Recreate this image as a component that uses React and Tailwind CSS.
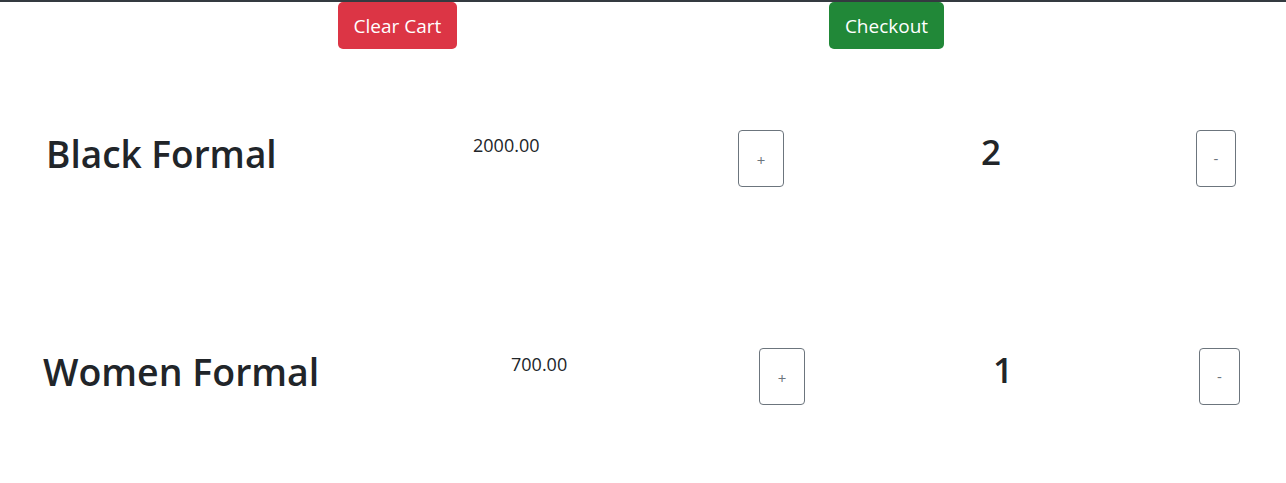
export default function App() {
  const font = { fontFamily: '"Open Sans", "Noto Sans", sans-serif' };

  return (
    <div className="min-h-[483px] bg-white text-[#212529] border-t-2 border-[#343a40]" style={font}>
      {/* Actions */}
      <div className="flex">
        <div className="w-[829px] pl-[338px]">
          <button className="w-[119px] h-[47px] rounded-[5px] bg-[#dc3545] text-white text-[19px] pt-[2px]">
            Clear Cart
          </button>
        </div>
        <button className="w-[115px] h-[47px] rounded-[5px] bg-[#218838] text-white text-[19px] pt-[2px]">
          Checkout
        </button>
      </div>

      {/* Item 1 */}
      <div className="flex items-start mt-[81px]">
        <div className="w-[473px] pl-[46px]">
          <h1 className="text-[37px] font-semibold leading-[48px]">Black Formal</h1>
        </div>
        <div className="w-[265px] pt-[1px] text-[18px] leading-7">2000.00</div>
        <div className="w-[243px]">
          <button className="w-[46px] h-[57px] rounded border border-[#6c757d] text-[#6c757d] text-[15px] pt-[4px]">+</button>
        </div>
        <div className="w-[215px] pt-[1px] text-[35px] font-semibold leading-[42px]">2</div>
        <button className="w-[40px] h-[57px] rounded border border-[#6c757d] text-[#6c757d] text-[15px]">-</button>
      </div>

      {/* Item 2 */}
      <div className="flex items-start mt-[161px]">
        <div className="w-[511px] pl-[43px]">
          <h1 className="text-[37.5px] font-semibold leading-[48px]">Women Formal</h1>
        </div>
        <div className="w-[248px] pt-[2px] text-[18px] leading-7">700.00</div>
        <div className="w-[234px]">
          <button className="w-[46px] h-[57px] rounded border border-[#6c757d] text-[#6c757d] text-[15px] pt-[4px]">+</button>
        </div>
        <div className="w-[206px] pt-[1px] text-[35px] font-semibold leading-[42px]">1</div>
        <button className="w-[41px] h-[57px] rounded border border-[#6c757d] text-[#6c757d] text-[15px]">-</button>
      </div>
    </div>
  );
}
